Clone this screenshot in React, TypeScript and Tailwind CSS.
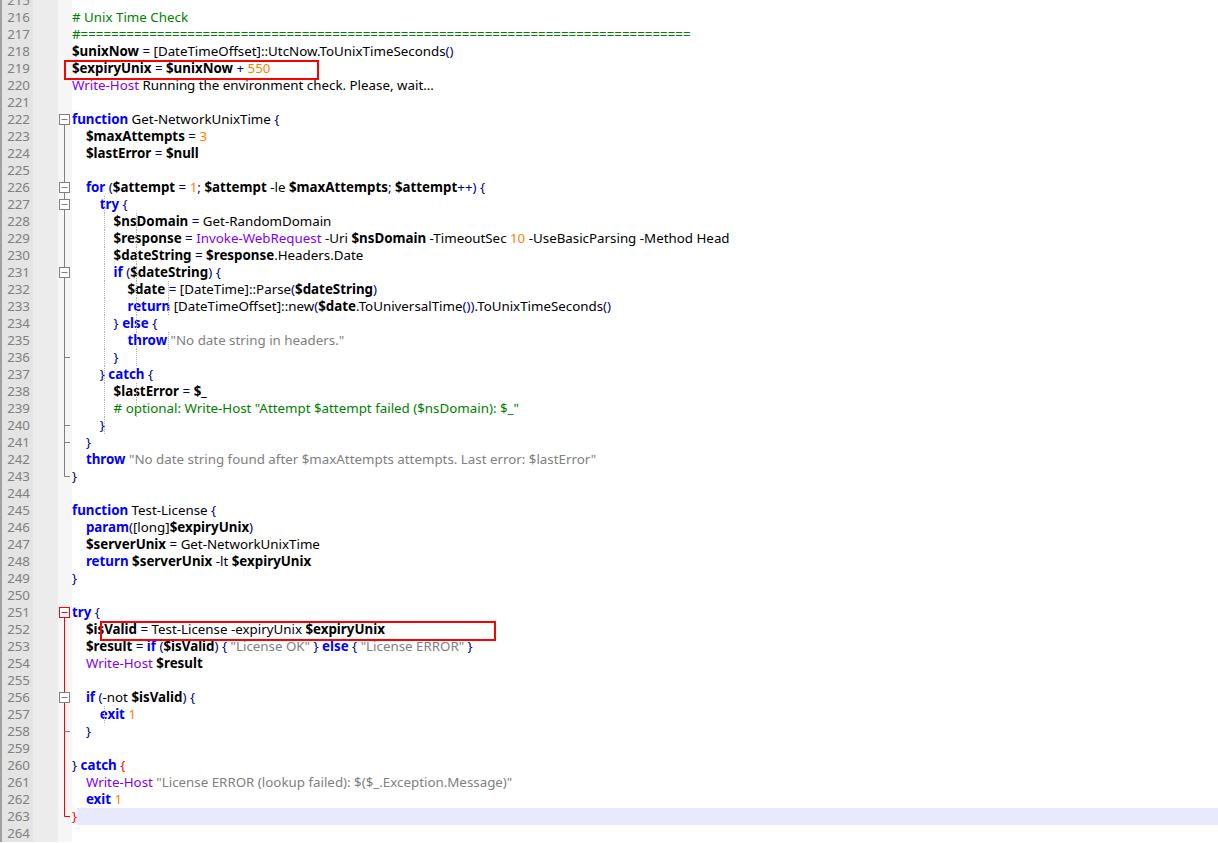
import type { ReactNode } from "react";

const START = 215;

const SRC = `
# Unix Time Check
#================================================================================
$unixNow = [DateTimeOffset]::UtcNow.ToUnixTimeSeconds()
$expiryUnix = $unixNow + 550
Write-Host Running the environment check. Please, wait...

function Get-NetworkUnixTime {
    $maxAttempts = 3
    $lastError = $null

    for ($attempt = 1; $attempt -le $maxAttempts; $attempt++) {
        try {
            $nsDomain = Get-RandomDomain
            $response = Invoke-WebRequest -Uri $nsDomain -TimeoutSec 10 -UseBasicParsing -Method Head
            $dateString = $response.Headers.Date
            if ($dateString) {
                $date = [DateTime]::Parse($dateString)
                return [DateTimeOffset]::new($date.ToUniversalTime()).ToUnixTimeSeconds()
            } else {
                throw "No date string in headers."
            }
        } catch {
            $lastError = $_
            # optional: Write-Host "Attempt $attempt failed ($nsDomain): $_"
        }
    }
    throw "No date string found after $maxAttempts attempts. Last error: $lastError"
}

function Test-License {
    param([long]$expiryUnix)
    $serverUnix = Get-NetworkUnixTime
    return $serverUnix -lt $expiryUnix
}

try {
    $isValid = Test-License -expiryUnix $expiryUnix
    $result = if ($isValid) { "License OK" } else { "License ERROR" }
    Write-Host $result

    if (-not $isValid) {
        exit 1
    }

} catch {
    Write-Host "License ERROR (lookup failed): $($_.Exception.Message)"
    exit 1
}

`.split("\n").slice(0, 50);

const KEYWORDS = new Set(["function", "for", "try", "if", "else", "return", "throw", "catch", "exit", "param"]);
const CMDLETS = new Set(["Write-Host", "Invoke-WebRequest"]);

const TOKEN = /(#.*$)|("[^"]*")|(\$[A-Za-z_]\w*|\$_)|(\b\d+\b)|([A-Za-z][\w-]*)|([=(){}+;])|(\s+|.)/g;

function renderLine(text: string, num: number): ReactNode[] {
  const out: ReactNode[] = [];
  let m: RegExpExecArray | null;
  let i = 0;
  TOKEN.lastIndex = 0;
  while ((m = TOKEN.exec(text))) {
    if (m[0] === "") break;
    const t = m[0];
    let cls = "text-black";
    if (m[1]) cls = "text-[#008000]";
    else if (m[2]) cls = "text-[#808080]";
    else if (m[3]) cls = "text-black font-bold";
    else if (m[4]) cls = "text-[#ff8000]";
    else if (m[5] && KEYWORDS.has(t)) cls = "text-[#0000ff] font-bold";
    else if (m[5] && CMDLETS.has(t)) cls = "text-[#8000ff]";
    else if (m[6]) cls = "text-[#000080]";
    if ((num === 260 && t === "{") || (num === 263 && t === "}")) cls = "text-[#ff0000] bg-white";
    out.push(
      <span key={i++} className={cls}>
        {t}
      </span>,
    );
  }
  return out;
}

type Fold = "none" | "box" | "boxmid" | "v" | "tee" | "end";

function foldFor(n: number): Fold {
  if (n === 222 || n === 251) return "box";
  if ([226, 227, 231, 256].includes(n)) return "boxmid";
  if ([236, 240, 241, 258].includes(n)) return "tee";
  if (n === 243 || n === 263) return "end";
  if ((n > 222 && n < 243) || (n > 251 && n < 263)) return "v";
  return "none";
}

function FoldMark({ n }: { n: number }) {
  const f = foldFor(n);
  const red = n >= 251 && n <= 263;
  const line = red ? "#ff0000" : "#808080";
  const boxCol = n === 251 ? "#ff0000" : "#808080";
  return (
    <svg width="14" height="17" className="block">
      {(f === "v" || f === "tee" || f === "boxmid") && <line x1="6.5" y1="0" x2="6.5" y2="17" stroke={line} />}
      {f === "end" && <path d="M6.5 0V8.5H12" stroke={line} fill="none" />}
      {f === "tee" && <line x1="6.5" y1="8.5" x2="12" y2="8.5" stroke={red ? "#808080" : line} />}
      {f === "box" && <line x1="6.5" y1="8" x2="6.5" y2="17" stroke={line} />}
      {(f === "box" || f === "boxmid") && (
        <>
          <rect x="1.5" y="3.5" width="10" height="10" fill="white" stroke={boxCol} />
          <line x1="3.5" y1="8.5" x2="9.5" y2="8.5" stroke={boxCol} />
        </>
      )}
    </svg>
  );
}

function Guides({ indent }: { indent: number }) {
  const cols: number[] = [];
  for (let c = 4; c < indent; c += 4) cols.push(c);
  return (
    <>
      {cols.map((c) => (
        <span
          key={c}
          className="absolute top-0 bottom-0 border-l border-dotted border-[#b0b0b0]"
          style={{ left: c * 8 }}
        />
      ))}
    </>
  );
}

export default function App() {
  return (
    <div className="relative h-[843px] w-[1218px] overflow-hidden bg-white font-['Liberation_Mono'] text-[13.33px] leading-[17px]">
      <div className="-mt-[8px] flex flex-col">
        {SRC.map((text, idx) => {
          const n = START + idx;
          const indent = text.trim() ? text.length - text.trimStart().length : 0;
          return (
            <div key={n} className="flex h-[17px]">
              <div className="w-[33px] shrink-0 border-l-2 border-[#a0a0a0] bg-[#e4e4e4] pr-[3px] text-right text-[#808080]">
                {n}
              </div>
              <div className="w-[25px] shrink-0 bg-[#ececec]" />
              <div className="w-[14px] shrink-0 bg-[#f6f6f6]">
                <FoldMark n={n} />
              </div>
              <div className={`relative flex-1 whitespace-pre ${n === 263 ? "bg-[#e8e8ff]" : ""}`}>
                <Guides indent={indent} />
                {renderLine(text, n)}
              </div>
            </div>
          );
        })}
      </div>
      <div className="absolute left-[64px] top-[60px] h-[20px] w-[255px] border-2 border-[#ff0000]" />
      <div className="absolute left-[100px] top-[621px] h-[20px] w-[396px] border-2 border-[#ff0000]" />
    </div>
  );
}
